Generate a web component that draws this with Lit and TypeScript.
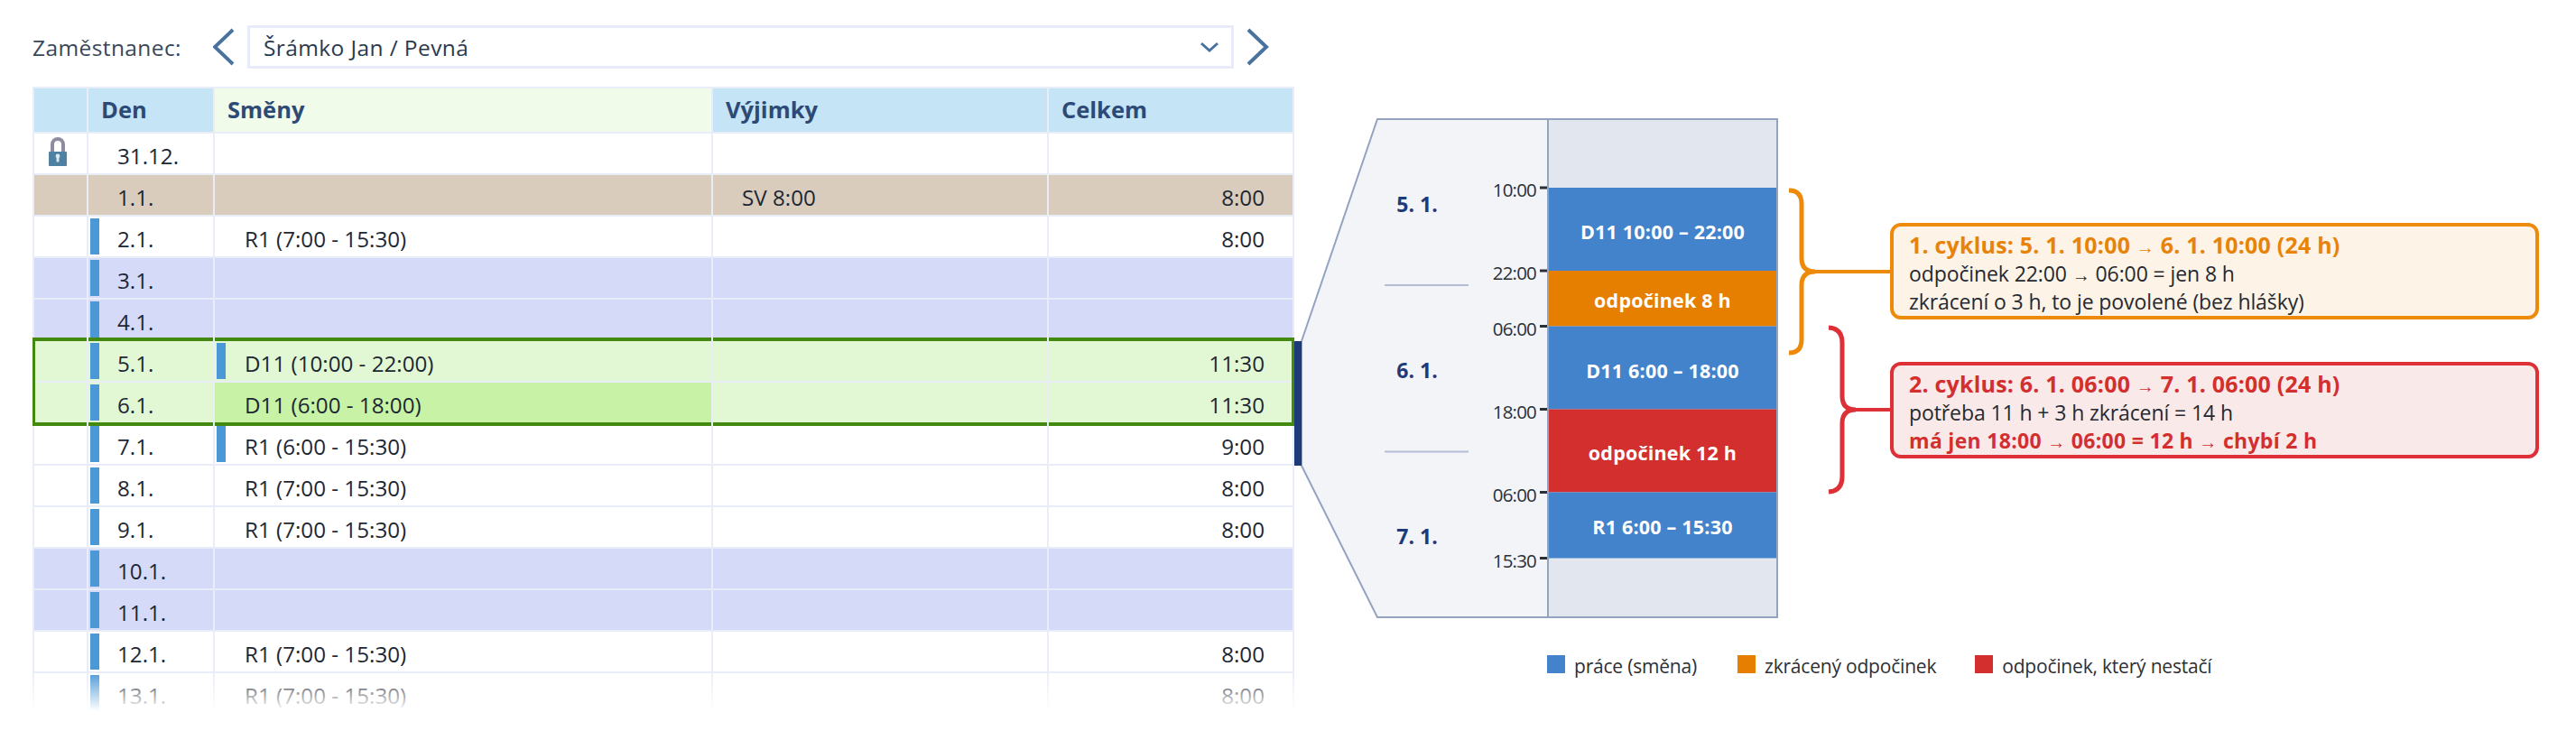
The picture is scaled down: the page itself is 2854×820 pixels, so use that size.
import { LitElement, html, css, svg } from "lit";
import { customElement } from "lit/decorators.js";

type Row = { day: string; kind?: string; dayBar?: boolean; shift?: string; shiftBar?: boolean; exc?: string; total?: string; lock?: boolean; shiftSel?: boolean; top?: boolean; bottom?: boolean };

const R1 = "R1 (7:00 - 15:30)";
const rows: Row[] = [
  { day: "31.12.", lock: true },
  { day: "1.1.", kind: "tan", exc: "SV 8:00", total: "8:00" },
  { day: "2.1.", dayBar: true, shift: R1, total: "8:00" },
  { day: "3.1.", kind: "free", dayBar: true },
  { day: "4.1.", kind: "free", dayBar: true },
  { day: "5.1.", kind: "green", dayBar: true, shift: "D11 (10:00 - 22:00)", shiftBar: true, total: "11:30", top: true },
  { day: "6.1.", kind: "green", dayBar: true, shift: "D11 (6:00 - 18:00)", shiftSel: true, total: "11:30", bottom: true },
  { day: "7.1.", dayBar: true, shift: "R1 (6:00 - 15:30)", shiftBar: true, total: "9:00" },
  { day: "8.1.", dayBar: true, shift: R1, total: "8:00" },
  { day: "9.1.", dayBar: true, shift: R1, total: "8:00" },
  { day: "10.1.", kind: "free", dayBar: true },
  { day: "11.1.", kind: "free", dayBar: true },
  { day: "12.1.", dayBar: true, shift: R1, total: "8:00" },
  { day: "13.1.", dayBar: true, shift: R1, total: "8:00" },
];

const times: [string, number][] = [["10:00", 208], ["22:00", 300], ["06:00", 361.5], ["18:00", 453.5], ["06:00", 545.5], ["15:30", 618.5]];
const blocks: [number, number, string][] = [[208, 92, "#4283cb"], [300, 61.5, "#e67e00"], [361.5, 92, "#4283cb"], [453.5, 92, "#d32f2f"], [545.5, 73, "#4283cb"]];
const blockLabels: [string, number][] = [["D11 10:00 – 22:00", 265], ["odpočinek 8 h", 340.5], ["D11 6:00 – 18:00", 418.5], ["odpočinek 12 h", 510], ["R1 6:00 – 15:30", 592]];
const dates: [string, number][] = [["5. 1.", 235], ["6. 1.", 419], ["7. 1.", 603]];

@customElement("app-root")
export class AppRoot extends LitElement {
  static styles = css`
    :host { display: block; width: 2854px; height: 820px; background: #fff; overflow: hidden; font-family: "Open Sans", "Noto Sans", sans-serif; }
    .page { display: flex; align-items: flex-start; height: 820px; }
    .left { flex: none; width: 1398px; margin-left: 36px; padding-top: 28px; display: flex; flex-direction: column; gap: 20px; }
    .bar { display: flex; align-items: center; height: 48px; color: #38475a; font-size: 24.5px; letter-spacing: .4px; }
    .label { width: 200px; flex: none; }
    .nav { flex: none; display: block; }
    .nav.prev { margin-right: 2px; }
    .nav.next { margin-left: 13px; }
    .select { flex: none; box-sizing: border-box; width: 1093px; height: 48px; border: 3px solid #e8ecf8; display: flex; align-items: center; justify-content: space-between; padding: 0 13px 0 15px; color: #2b3a4e; }
    .table { position: relative; height: 694px; overflow: hidden; background: #e9edf8; box-sizing: border-box; padding: 2px 2px 0; display: grid; grid-template-columns: 58px 138px 550px 370px 270px; grid-template-rows: 48px; grid-auto-rows: 44px; gap: 2px; }
    .head { background: #c5e4f6; color: #2c4a75; font-weight: 700; font-size: 25.5px; display: flex; align-items: center; padding: 0 0 3px 14px; box-sizing: border-box; }
    .head.shifts { background: #f0fbe9; }
    .head.first { padding: 0; }
    .cell { position: relative; background: #fff; color: #1d2733; font-size: 24.2px; display: flex; align-items: center; padding-top: 5px; box-sizing: border-box; }
    .tan { background: #d9ccbc; }
    .free { background: #d5daf9; }
    .green { background: #e2f8d4; }
    .cell.sel { background: #c8f3a6; }
    .dayc { padding-left: 32px; }
    .shiftc { padding-left: 33px; }
    .excc { padding-left: 32px; }
    .totc { justify-content: flex-end; padding-right: 31px; }
    .mark { position: absolute; left: 2px; top: 2px; width: 10px; height: 40px; background: #4a98d6; }
    .lock { position: absolute; left: 16px; top: 0; }
    .top::before { content: ""; position: absolute; left: 0; right: 0; top: -4px; height: 4px; background: #43880f; }
    .bottom::after { content: ""; position: absolute; left: 0; right: 0; bottom: -4px; height: 4px; background: #43880f; z-index: 1; }
    .edge { position: absolute; top: 278px; height: 98px; width: 3px; background: #43880f; z-index: 2; }
    .edge.l { left: 0; }
    .edge.r { right: 0; }
    .fade { position: absolute; left: 0; right: 0; bottom: 0; height: 46px; background: linear-gradient(to bottom, rgba(255,255,255,0), #fff 95%); z-index: 3; }
    .diagram { position: relative; flex: none; width: 1420px; height: 820px; }
    .diagram svg.art { display: block; }
    .t { font-family: "Open Sans", sans-serif; }
    .time { font-size: 20.5px; letter-spacing: -.8px; fill: #2c2f36; text-anchor: end; }
    .date { font-size: 23px; font-weight: 700; fill: #1f3a78; text-anchor: middle; }
    .blk { font-size: 21.5px; font-weight: 700; fill: #fff; text-anchor: middle; letter-spacing: .2px; }
    .callout { position: absolute; left: 660px; width: 719px; height: 107px; box-sizing: border-box; border: 4px solid; border-radius: 12px; padding: 5px 17px; font-size: 23px; line-height: 31.5px; color: #26292f; white-space: nowrap; letter-spacing: -.1px; }
    .callout.o { top: 247px; border-color: #ee8a0a; background: #fdf3e7; }
    .callout.r { top: 401px; border-color: #dd3037; background: #fae9e9; }
    .ttl { font-weight: 700; font-size: 25px; letter-spacing: .2px; }
    .o .ttl { color: #e8830a; }
    .r .ttl, .warn { color: #d32f2f; font-weight: 700; }
    .warn { letter-spacing: .3px; }
    .arrow { font-size: 20px; font-weight: 400; line-height: 0; }
    .legend { position: absolute; left: 280px; top: 726px; display: flex; font-size: 21px; color: #2c2f36; letter-spacing: -.2px; line-height: 24px; }
    .lg { display: flex; gap: 10px; margin-right: 45px; }
    .lg:nth-child(2) { margin-right: 43px; }
    .sw { width: 20px; height: 20px; flex: none; }
  `;

  private lock() {
    return html`<svg class="lock" width="20" height="36" viewBox="0 0 20 36">
      <path d="M4 20 V12 a6 6 0 0 1 12 0 V20" fill="none" stroke="#8f8ba0" stroke-width="4"/>
      <rect x="0" y="20" width="20" height="16" rx="1" fill="#4f81a3"/>
      <circle cx="10" cy="25" r="2.4" fill="#dce8f0"/>
      <rect x="8.6" y="25" width="2.8" height="6.5" fill="#dce8f0"/>
    </svg>`;
  }

  private brace(d: string, color: string) {
    return svg`<path d=${d} fill="none" stroke=${color} stroke-width="5"/>`;
  }

  private arrow() {
    return html`<span class="arrow">→</span>`;
  }

  render() {
    const a = this.arrow();
    return html`<div class="page">
      <div class="left">
        <div class="bar">
          <span class="label">Zaměstnanec:</span>
          <svg class="nav prev" width="36" height="48" viewBox="0 0 36 48"><path d="M22 5 L2 24 L22 43" fill="none" stroke="#4a729f" stroke-width="4"/></svg>
          <div class="select">
            <span>Šrámko Jan / Pevná</span>
            <svg width="22" height="14" viewBox="0 0 22 14"><path d="M2 3 L11 11 L20 3" fill="none" stroke="#4a729f" stroke-width="3"/></svg>
          </div>
          <svg class="nav next" width="36" height="48" viewBox="0 0 36 48"><path d="M3 5 L23 24 L3 43" fill="none" stroke="#4a729f" stroke-width="4"/></svg>
        </div>
        <div class="table">
          <div class="head first"></div>
          <div class="head">Den</div>
          <div class="head shifts">Směny</div>
          <div class="head">Výjimky</div>
          <div class="head">Celkem</div>
          ${rows.map((r) => {
            const edge = `${r.kind ?? ""} ${r.top ? "top" : ""} ${r.bottom ? "bottom" : ""}`;
            return html`
              <div class="cell ${edge}">${r.lock ? this.lock() : ""}</div>
              <div class="cell dayc ${edge}">${r.dayBar ? html`<i class="mark"></i>` : ""}${r.day}</div>
              <div class="cell shiftc ${edge} ${r.shiftSel ? "sel" : ""}">${r.shiftBar ? html`<i class="mark"></i>` : ""}${r.shift ?? ""}</div>
              <div class="cell excc ${edge}">${r.exc ?? ""}</div>
              <div class="cell totc ${edge}">${r.total ?? ""}</div>`;
          })}
          <div class="edge l"></div>
          <div class="edge r"></div>
          <div class="fade"></div>
        </div>
      </div>
      <div class="diagram">
        <svg class="art" width="1420" height="820" viewBox="1434 0 1420 820">
          <polygon points="1442,378 1526,132 1968,132 1968,684 1526,684 1442,516" fill="#f2f4f8" stroke="#94a3c0" stroke-width="2"/>
          <rect x="1715" y="132" width="254" height="552" fill="#e2e6ef" stroke="#94a3c0" stroke-width="2"/>
          ${blocks.map(([y, h, c]) => svg`<rect x="1716" y=${y} width="252" height=${h} fill=${c}/>`)}
          <rect x="1434" y="378" width="8" height="138" fill="#1f3a78"/>
          <rect x="1534" y="315" width="93" height="2" fill="#b4bdd4"/>
          <rect x="1534" y="499.5" width="93" height="2" fill="#b4bdd4"/>
          ${times.map(([t, y]) => svg`
            <rect x="1706" y=${y - 1.5} width="8" height="3" fill="#2c2f36"/>
            <text class="t time" x="1702" y=${y + 10}>${t}</text>`)}
          ${dates.map(([t, y]) => svg`<text class="t date" x="1570" y=${y}>${t}</text>`)}
          ${blockLabels.map(([t, y]) => svg`<text class="t blk" x="1842" y=${y}>${t}</text>`)}
          ${this.brace("M1982 211 Q1996 211 1996 226 V286 Q1996 301 2011 301 Q1996 301 1996 316 V376 Q1996 391 1982 391", "#ee8a0a")}
          <rect x="2008" y="299" width="90" height="4" fill="#ee8a0a"/>
          ${this.brace("M2026 363 Q2041 364 2041 380 V439 Q2041 454 2056 454 Q2041 454 2041 469 V528 Q2041 544 2026 545", "#dd3037")}
          <rect x="2053" y="452" width="45" height="4" fill="#dd3037"/>
        </svg>
        <div class="callout o">
          <div class="ttl">1. cyklus: 5. 1. 10:00 ${a} 6. 1. 10:00 (24 h)</div>
          <div>odpočinek 22:00 ${a} 06:00 = jen 8 h</div>
          <div>zkrácení o 3 h, to je povolené (bez hlášky)</div>
        </div>
        <div class="callout r">
          <div class="ttl">2. cyklus: 6. 1. 06:00 ${a} 7. 1. 06:00 (24 h)</div>
          <div>potřeba 11 h + 3 h zkrácení = 14 h</div>
          <div class="warn">má jen 18:00 ${a} 06:00 = 12 h ${a} chybí 2 h</div>
        </div>
        <div class="legend">
          <div class="lg"><span class="sw" style="background:#4283cb"></span>práce (směna)</div>
          <div class="lg"><span class="sw" style="background:#e67e00"></span>zkrácený odpočinek</div>
          <div class="lg"><span class="sw" style="background:#d32f2f"></span>odpočinek, který nestačí</div>
        </div>
      </div>
    </div>`;
  }
}
